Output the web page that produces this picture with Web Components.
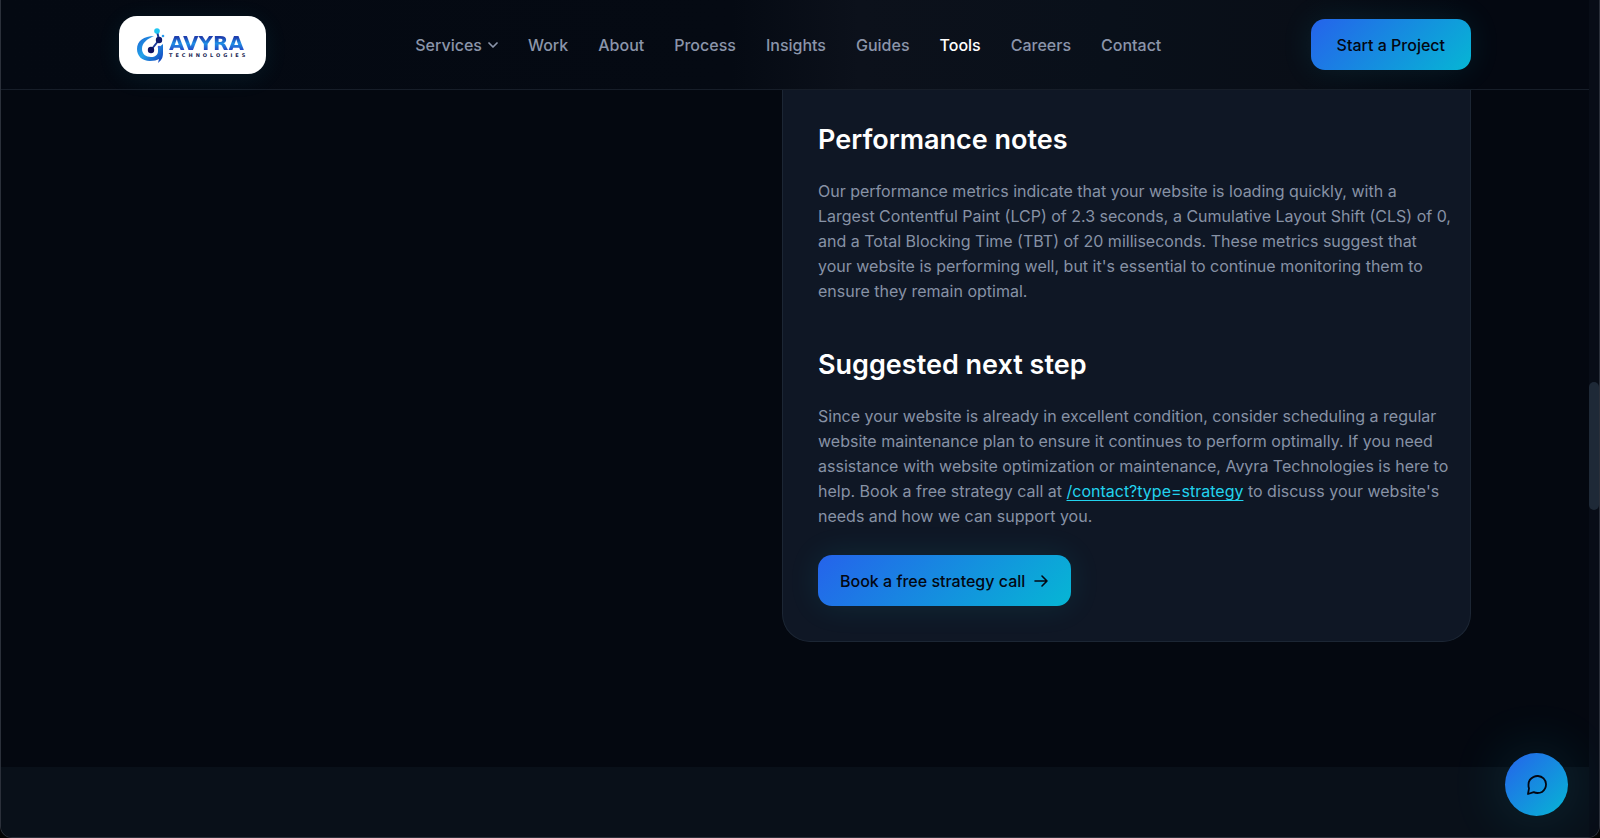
<!DOCTYPE html>
<html lang="en">
<head>
<meta charset="utf-8">
<meta name="viewport" content="width=device-width, initial-scale=1">
<title>Avyra Technologies</title>
<style>
  html { background: #030303; }
  body { margin: 0; font-family: Inter, "Liberation Sans", sans-serif; font-size: 16px; color: #94a0b4; }
</style>
</head>
<body>
<avyra-page></avyra-page>
<script>
const define = (name, markup, setup) => {
  const template = document.createElement('template');
  template.innerHTML = markup;
  customElements.define(name, class extends HTMLElement {
    constructor() {
      super();
      this.attachShadow({ mode: 'open' }).append(template.content.cloneNode(true));
    }
    connectedCallback() { if (setup) setup(this); }
  });
};

define('avyra-logo', `
<style>
  :host { display: block; }
  a { display: flex; align-items: center; gap: 4px; box-sizing: border-box; width: 147px; height: 58px;
      padding: 0 17px; border-radius: 18px; background: #fff; text-decoration: none;
      box-shadow: 0 4px 24px rgba(34, 211, 238, .08); }
  svg { flex: none; width: 29px; height: 38px; }
  .words { display: flex; flex-direction: column; gap: 1px; padding-top: 4px; }
  .name { font: bold 20px/15px "DejaVu Sans", sans-serif;
      background: linear-gradient(180deg, #1e3fae 10%, #1f8fe6 50%, #2450c8 90%); -webkit-background-clip: text; background-clip: text; color: transparent; }
  .sub { font: bold 5px/6px "DejaVu Sans", sans-serif; letter-spacing: 3px; color: #1b1f55; white-space: nowrap; }
</style>
<a href="#" aria-label="Avyra Technologies home">
  <svg viewBox="0 0 29 38" aria-hidden="true">
    <defs>
      <linearGradient id="ring" x1="0" y1="0" x2="1" y2="1"><stop offset="0" stop-color="#1a5fd0"/><stop offset=".45" stop-color="#22a4ea"/><stop offset="1" stop-color="#1238b8"/></linearGradient>
    </defs>
    <path d="M18 10C8 10 1 15 1 23c0 7 5 12 13 12 4 0 7-1 9-2l-1 4c4-3 5-6 5-10v-9l-5 4v3c0 4-3 6-7 6-5 0-9-3-9-8 0-6 5-10 12-13z" fill="url(#ring)"/>
    <path d="M15 24l8-10M23 14l-2-9" stroke="#1a3a9a" stroke-width="2"/>
    <circle cx="15" cy="24" r="3.200" fill="#0e1160"/><circle cx="23" cy="14" r="3.200" fill="#101a6c"/>
    <circle cx="21" cy="5" r="2.800" fill="#20c6f2"/><circle cx="27" cy="10" r="1.300" fill="#2a9df0"/><circle cx="23" cy="21" r="1.300" fill="#3b62d8"/>
  </svg>
  <span class="words"><span class="name">AVYRA</span><span class="sub">TECHNOLOGIES</span></span>
</a>`);

define('avyra-button', `
<style>
  :host { display: inline-block; }
  button { display: flex; align-items: center; gap: 8px; height: 51px; padding: 0 var(--pad, 26px); border: 0;
      border-radius: 14px; background: linear-gradient(135deg, #2563eb, #06b6d4); color: #030712;
      font: 500 16px/24px Inter, sans-serif; white-space: nowrap; cursor: pointer;
      box-shadow: 0 0 32px rgba(34, 211, 238, .1); }
</style>
<button type="button"><slot></slot></button>`);

define('nav-link', `
<style>
  :host { display: block; }
  a { display: flex; align-items: center; gap: 6px; color: #8b95aa; font: 500 16px/24px Inter, sans-serif; text-decoration: none; }
  :host([active]) a { color: #fff; }
  svg { display: none; width: 10px; height: 10px; }
  :host([menu]) svg { display: block; }
</style>
<a href="#"><slot></slot><svg viewBox="0 0 10 10" fill="none" stroke="currentColor" stroke-width="1.7" stroke-linecap="round" stroke-linejoin="round" aria-hidden="true"><path d="M1 3l4 4 4-4"/></svg></a>`,
host => { if (host.hasAttribute('active')) host.shadowRoot.querySelector('a').setAttribute('aria-current', 'page'); });

define('site-header', `
<style>
  :host { display: block; border-bottom: 1px solid #171e29;
      background: linear-gradient(90deg, #040912 0, #050a13 46%, #0c111b 54%, #09101a 70%, #090e17 82%, #040811 92%); }
  .bar { display: flex; align-items: center; justify-content: space-between; box-sizing: border-box;
      max-width: 1352px; height: 89px; margin: 0 auto; }
  nav { display: flex; gap: 30px; }
</style>
<header class="bar">
  <avyra-logo></avyra-logo>
  <nav aria-label="Main">
    <nav-link menu>Services</nav-link><nav-link>Work</nav-link><nav-link>About</nav-link><nav-link>Process</nav-link>
    <nav-link>Insights</nav-link><nav-link>Guides</nav-link><nav-link active>Tools</nav-link><nav-link>Careers</nav-link><nav-link>Contact</nav-link>
  </nav>
  <avyra-button>Start a Project</avyra-button>
</header>`);

define('report-section', `
<style>
  :host { display: block; }
  h2 { margin: 0 0 21px; color: #fff; font: 600 27px/36px Inter, sans-serif; }
  p { margin: 0; font: 400 16px/25px Inter, sans-serif; color: #8792a5; }
  ::slotted(a) { color: #22d3ee; text-decoration: underline; text-underline-offset: 3px; }
</style>
<section><h2></h2><p><slot></slot></p></section>`,
host => { host.shadowRoot.querySelector('h2').textContent = host.getAttribute('heading'); });

define('report-card', `
<style>
  :host { display: block; box-sizing: border-box; padding: 32px 18px 35px 35px; border: 1px solid #1c2634; border-top: 0;
      border-radius: 0 0 28px 28px; background: #0f1725; }
  .stack { display: flex; flex-direction: column; gap: 43px; }
  .action { margin-top: 26px; }
  avyra-button { --pad: 22px; display: inline-block; vertical-align: top; }
  svg { width: 16px; height: 16px; }
</style>
<article>
  <div class="stack">
    <report-section heading="Performance notes">Our performance metrics indicate that your website is loading quickly, with a Largest Contentful Paint (LCP) of 2.3 seconds, a Cumulative Layout Shift (CLS) of 0, and a Total Blocking Time (TBT) of 20 milliseconds. These metrics suggest that your website is performing well, but it's essential to continue monitoring them to ensure they remain optimal.</report-section>
    <report-section heading="Suggested next step">Since your website is already in excellent condition, consider scheduling a regular website maintenance plan to ensure it continues to perform optimally. If you need assistance with website optimization or maintenance, Avyra Technologies is here to help. Book a free strategy call at <a href="/contact?type=strategy">/contact?type=strategy</a> to discuss your website's needs and how we can support you.</report-section>
  </div>
  <div class="action"><avyra-button>Book a free strategy call <svg viewBox="0 0 16 16" fill="none" stroke="currentColor" stroke-width="1.6" stroke-linecap="round" stroke-linejoin="round" aria-hidden="true"><path d="M2 8h12M9 3l5 5-5 5"/></svg></avyra-button></div>
</article>`);

define('chat-button', `
<style>
  :host { position: absolute; right: 31px; bottom: 21px; }
  button { display: grid; place-items: center; width: 63px; height: 63px; padding: 0; border: 0; border-radius: 50%;
      background: linear-gradient(135deg, #2563eb, #06b6d4); color: #030712; cursor: pointer; box-shadow: 0 0 60px rgba(34, 211, 238, .16); }
  svg { width: 24px; height: 24px; }
</style>
<button type="button" aria-label="Open chat">
  <svg viewBox="0 0 24 24" fill="none" stroke="currentColor" stroke-width="1.8" stroke-linecap="round" stroke-linejoin="round" aria-hidden="true"><path d="M21 11.500a8.380 8.380 0 0 1-.9 3.800 8.500 8.500 0 0 1-7.600 4.700 8.380 8.380 0 0 1-3.800-.9L3 21l1-5.700a8.380 8.380 0 0 1-.5-3.800 8.500 8.500 0 0 1 5.200-7.600 8.380 8.380 0 0 1 3.800-.9h.5a8.480 8.480 0 0 1 8 8z"/></svg>
</button>`);

define('scroll-rail', `
<style>
  :host { display: grid; grid-template-rows: 382fr 127fr 327fr; background: #080d17; }
  span { grid-row: 2; border-radius: 5px; background: #1e2937; }
</style>
<span></span>`);

define('avyra-page', `
<style>
  :host { position: relative; display: grid; grid-template-columns: 1fr 10px; box-sizing: border-box; min-height: 100vh;
      border: 1px solid #2b303a; border-top: 0; border-radius: 0 0 12px 12px; overflow: hidden; background: #040810; }
  .view { display: flex; flex-direction: column; }
  main { display: grid; grid-template-columns: 1fr 689px; box-sizing: border-box; width: 100%; max-width: 1352px; margin: 0 auto; }
  report-card { grid-column: 2; }
  .next { flex: 1; margin-top: 125px; background: #091019; }
</style>
<div class="view">
  <site-header></site-header>
  <main><report-card></report-card></main>
  <div class="next"></div>
</div>
<scroll-rail></scroll-rail>
<chat-button></chat-button>`);
</script>
</body>
</html>
